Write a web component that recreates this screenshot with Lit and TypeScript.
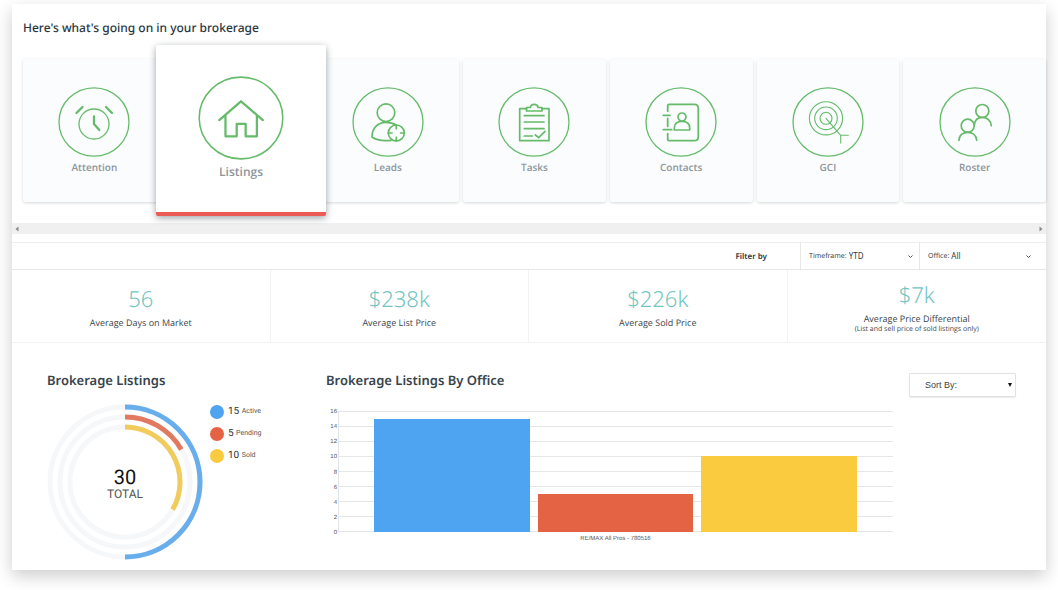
import { LitElement, html, svg, css, SVGTemplateResult } from "lit";
import { customElement, property, state } from "lit/decorators.js";
import { classMap } from "lit/directives/class-map.js";

const icons: Record<string, SVGTemplateResult> = {
  Attention: svg`
    <circle cx="0" cy="2" r="15" stroke-width="1.3" />
    <path stroke-width="2.3" d="M0-5.7V2L5.3 8M-17.5-9l6-6M12-15l6 6" />`,
  Listings: svg`
    <path stroke-width="1.9" d="M-18.2 1.7 0-14 18.3 1.7M-13-2.5V15.3H-3.6V5H3.9V15.3H13.3V-2.5" />`,
  Leads: svg`
    <circle cx="-2" cy="-9.3" r="8.8" />
    <path d="M8 3C6 1.6 2.500.3-2 .3-11 .3-16 7-16 15-12 18-4 19 3 18.300" />
    <circle cx="8.300" cy="11" r="8" />
    <path d="M8.300 3v3.700M8.300 15.300V19M.3 11H4M12.600 11h3.700" />`,
  Tasks: svg`
    <path d="M-7.500-13.300h-6.800v32H15v-32H8" />
    <path d="M-7.500-11v-3.500h3.700C-3.300-17-1.500-17.600.2-17.600S3.700-17 4.200-14.500H8V-11Z" />
    <path d="M-9.700-6.300H10M-9.700 0H10M-9.700 6.700H10M-9.700 14h8M1.300 13l3.400 2.700L11 9.300" />`,
  Contacts: svg`
    <path stroke-width="1.800" d="M-13.300-10.700v-5.600q0-1.400 1.400-1.400H13.300q4 0 4 4V14.700q0 4-4 4H-11.900q-1.400 0-1.400-1.400V11.700M-13.300-3.500V4.300M-17.700-6.700h6.700M-17.700 7.700h8.400" />
    <circle cx="1" cy="-5" r="4" />
    <path d="M-6.700 8V6C-6.700 1-3-.7 1-.7S8.700 1 8.700 6V8Z" />`,
  GCI: svg`
    <g stroke-width="1.100">
      <circle cx="-2" cy="-3.700" r="16.600" />
      <circle cx="-2" cy="-3.700" r="11.300" />
      <circle cx="-2" cy="-3.700" r="6" />
      <path d="M-2-3.700 12.700 13.300H20.300M12.700 13.300V21" />
    </g>`,
  Roster: svg`
    <circle cx="7.300" cy="-11" r="6.500" />
    <path d="M-.7 3C0-3 4-4.600 7.300-4.600 12-4.600 16-1.500 16.300 3.700" />
    <circle cx="-7.300" cy="3.700" r="6.500" />
    <path d="M-16 18.300C-16 13-12 10.300-7.300 10.300S1.300 13 1.700 18.300" />`,
};

@customElement("nav-card")
class NavCard extends LitElement {
  @property() label = "";
  @property({ type: Boolean, reflect: true }) active = false;

  static styles = css`
    :host {
      display: block;
      height: 143px;
    }
    :host([active]) {
      position: relative;
      z-index: 1;
      height: 171px;
      margin: -14px;
    }
    .card {
      box-sizing: border-box;
      display: flex;
      flex-direction: column;
      align-items: center;
      gap: 2px;
      width: 100%;
      height: 100%;
      padding: 28px 0 0;
      border: 0;
      border-radius: 2px;
      background: #fafcfe;
      box-shadow: 0 1px 3px rgba(50, 60, 70, 0.2);
      color: #8e969b;
      font: 600 10px/16px "Open Sans", "Noto Sans", sans-serif;
      text-rendering: geometricPrecision;
      cursor: pointer;
    }
    .card.active {
      gap: 4px;
      padding-top: 31px;
      border-bottom: 4px solid #ec5b56;
      background: #fff;
      box-shadow: 0 2px 7px rgba(40, 50, 60, 0.45);
      font-size: 12px;
    }
    .icon {
      width: 72px;
      height: 70px;
      fill: none;
      stroke: #66bb6a;
      stroke-width: 1.7;
      stroke-linecap: round;
      stroke-linejoin: round;
    }
    .active .icon {
      width: 86px;
      height: 84px;
    }
    .ring {
      stroke-width: 1.3;
    }
  `;

  render() {
    return html`
      <button class=${classMap({ card: true, active: this.active })} aria-pressed=${this.active}>
        <svg class="icon" viewBox="-36 -35 72 70" aria-hidden="true">
          <ellipse class="ring" rx="35" ry="34.2" />
          ${icons[this.label]}
        </svg>
        <span>${this.label}</span>
      </button>
    `;
  }
}

const series = [
  { name: "Active", value: 15, fill: "#4fa4f2", arc: "#68adec", radius: 75 },
  { name: "Pending", value: 5, fill: "#e56345", arc: "#e27a62", radius: 65 },
  { name: "Sold", value: 10, fill: "#facb3f", arc: "#f1cc5d", radius: 55 },
];
const total = 30;
const axisMax = 16;
const ticks = [16, 14, 12, 10, 8, 6, 4, 2, 0];

// Clockwise arc that starts at twelve o'clock and covers the given share of the circle.
function arcPath(radius: number, share: number): string {
  const angle = share * 2 * Math.PI;
  const x = radius * Math.sin(angle);
  const y = -radius * Math.cos(angle);
  return `M0 ${-radius}A${radius} ${radius} 0 ${share > 0.5 ? 1 : 0} 1 ${x} ${y}`;
}

@customElement("listings-rings")
class ListingsRings extends LitElement {
  static styles = css`
    :host {
      display: flex;
      align-items: flex-start;
      gap: 7px;
      font-family: Roboto, sans-serif;
      text-rendering: geometricPrecision;
    }
    .donut {
      display: grid;
      place-items: center;
    }
    .rings,
    .total {
      grid-area: 1 / 1;
    }
    .rings {
      width: 156px;
      height: 156px;
      fill: none;
      stroke-width: 5;
    }
    .track {
      stroke: #f5f7f9;
    }
    .total {
      display: flex;
      flex-direction: column;
      align-items: center;
      padding-top: 4px;
      color: #555;
      font-size: 12px;
      line-height: 14px;
    }
    .count {
      color: #111;
      font-size: 20px;
      line-height: 19px;
    }
    .legend {
      display: flex;
      flex-direction: column;
      gap: 6px;
      margin: 0;
      padding: 0;
      list-style: none;
    }
    .item {
      display: flex;
      align-items: center;
      gap: 4px;
      height: 16px;
      color: #333;
      font-size: 10px;
      line-height: 12px;
    }
    .dot {
      width: 14px;
      height: 14px;
      border-radius: 50%;
    }
    .text {
      padding-bottom: 2px;
    }
    .name {
      color: #555;
      font-size: 7px;
      vertical-align: 1px;
    }
  `;

  render() {
    return html`
      <div class="donut">
        <svg class="rings" viewBox="-78 -78 156 156" aria-hidden="true">
          ${series.map(
            (s) => svg`
              <circle class="track" r=${s.radius} />
              <path stroke=${s.arc} d=${arcPath(s.radius, s.value / total)} />`
          )}
        </svg>
        <div class="total"><span class="count">${total}</span><span>TOTAL</span></div>
      </div>
      <ul class="legend">
        ${series.map(
          (s) => html`<li class="item">
            <span class="dot" style="background:${s.fill}"></span>
            <span class="text">${s.value} <span class="name">${s.name}</span></span>
          </li>`
        )}
      </ul>
    `;
  }
}

@customElement("office-bars")
class OfficeBars extends LitElement {
  static styles = css`
    :host {
      display: grid;
      grid-template-columns: 12px minmax(0, 1fr);
      color: #555;
      font: 6px/8px "Liberation Sans", Arial, sans-serif;
    }
    .axis {
      display: flex;
      flex-direction: column;
      justify-content: space-between;
      grid-row: 1 / 3;
      height: 129px;
      padding-right: 1px;
      text-align: right;
    }
    .plot {
      display: grid;
      height: 121px;
      margin-top: 3px;
    }
    .lines,
    .bars {
      grid-area: 1 / 1;
      display: flex;
    }
    .lines {
      flex-direction: column;
      justify-content: space-between;
      border-left: 1px solid #e4e7e8;
    }
    .line {
      height: 1px;
      background: #e4e7e8;
    }
    .bars {
      align-items: flex-end;
      justify-content: center;
      gap: 8px;
      padding: 0 6.5%;
      z-index: 1;
    }
    .bar {
      flex: 1;
    }
    .office {
      grid-column: 2;
      margin-top: 3px;
      text-align: center;
    }
  `;

  render() {
    return html`
      <div class="axis">${ticks.map((t) => html`<span>${t}</span>`)}</div>
      <div class="plot">
        <div class="lines">${ticks.map(() => html`<div class="line"></div>`)}</div>
        <div class="bars">
          ${series.map(
            (s) =>
              html`<div class="bar" style="height:${(s.value / axisMax) * 100}%;background:${s.fill}"></div>`
          )}
        </div>
      </div>
      <div class="office">RE/MAX All Pros - 780516</div>
    `;
  }
}

@customElement("app-root")
class AppRoot extends LitElement {
  @state() private selected = "Listings";

  static styles = css`
    :host {
      display: block;
      padding: 4px 12px 20px;
      background: #fff;
      color: #2a363e;
      font-family: "Open Sans", "Noto Sans", sans-serif;
      text-rendering: geometricPrecision;
    }
    .panel {
      background: #fff;
      box-shadow: 0 6px 16px rgba(0, 0, 0, 0.2);
    }
    .overview {
      padding: 14px 0 21px 11px;
    }
    .title {
      margin: 0 0 21px;
      font-family: "Noto Sans", "Open Sans", sans-serif;
      font-size: 12px;
      font-weight: 500;
      line-height: 20px;
    }
    .cards {
      display: grid;
      grid-template-columns: repeat(7, minmax(0, 1fr));
      gap: 4px;
    }
    .scrollbar {
      display: flex;
      align-items: center;
      justify-content: space-between;
      height: 11px;
      margin-bottom: 8px;
      padding: 0 3px;
      background: #f0f0f0;
    }
    .arrow {
      width: 4px;
      height: 6px;
      fill: #8a8a8a;
    }
    .filters {
      display: grid;
      grid-template-columns: 1fr 119px 127px;
      height: 26px;
      border-top: 1px solid #eceeee;
      border-bottom: 1px solid #e6e8e8;
      font-family: "Noto Sans", "Open Sans", sans-serif;
      line-height: 27px;
    }
    .filter-title {
      padding-right: 33px;
      text-align: right;
      font-size: 8px;
      font-weight: 600;
    }
    .filter {
      display: flex;
      align-items: center;
      gap: 2px;
      padding: 0 6px 0 8px;
      border-left: 1px solid #e6e8e8;
      color: #3c464c;
      font-size: 7px;
    }
    .filter.last {
      padding-right: 15px;
    }
    .choice {
      flex: 1;
      min-width: 0;
      padding: 0 0 1px;
      border: 0;
      background: none;
      appearance: none;
      color: #2f393f;
      font: 8px/16px "Noto Sans", "Open Sans", sans-serif;
    }
    .chevron {
      width: 5px;
      height: 5px;
      fill: none;
      stroke: #555;
    }
    .stats {
      display: grid;
      grid-template-columns: repeat(4, minmax(0, 1fr));
      border-bottom: 1px solid #f1f3f3;
    }
    .stat {
      box-sizing: border-box;
      display: flex;
      flex-direction: column;
      align-items: center;
      justify-content: center;
      min-height: 72px;
      padding-top: 2px;
      border-right: 1px solid #f1f3f3;
      font-size: 9px;
      line-height: 12px;
      color: #3c464c;
    }
    .stat:last-child {
      padding-top: 4px;
      border-right: 0;
    }
    .figure {
      padding-bottom: 4px;
      color: #71c5bf;
      font-family: "Noto Sans", "Open Sans", sans-serif;
      font-size: 22px;
      font-weight: 300;
      line-height: 28px;
    }
    .note {
      font-size: 7px;
      line-height: 10px;
    }
    .charts {
      display: grid;
      grid-template-columns: 279px minmax(0, 1fr) 107px;
      padding: 27px 30px 10px 35px;
    }
    .heading {
      margin: 0;
      font-family: "Noto Sans", "Open Sans", sans-serif;
      font-size: 13px;
      font-weight: 600;
      line-height: 20px;
      color: #38444c;
    }
    .rings {
      margin-top: 14px;
    }
    .bars {
      margin-top: 18px;
      padding-right: 16px;
    }
    .sort {
      display: grid;
      align-self: start;
      align-items: center;
      margin-top: 3px;
    }
    .sort-select {
      grid-area: 1 / 1;
      width: 100%;
      height: 24px;
      padding: 0 15px;
      border: 1px solid #dfe3e5;
      border-radius: 1px;
      background: #fff;
      box-shadow: 0 1px 1px rgba(0, 0, 0, 0.08);
      appearance: none;
      color: #444;
      font: 9px "Liberation Sans", Arial, sans-serif;
    }
    .caret {
      grid-area: 1 / 1;
      justify-self: end;
      width: 4px;
      height: 4px;
      margin-right: 4px;
      fill: #111;
      pointer-events: none;
    }
  `;

  private chevron() {
    return html`<svg class="chevron" viewBox="0 0 5 5" aria-hidden="true"><path d="M.5 1.500 2.500 3.500 4.500 1.500" /></svg>`;
  }

  private stat(figure: string, label: string, note = "") {
    return html`<div class="stat">
      <span class="figure">${figure}</span>
      <span>${label}</span>
      ${note ? html`<span class="note">${note}</span>` : ""}
    </div>`;
  }

  render() {
    return html`
      <main class="panel">
        <section class="overview">
          <h1 class="title">Here's what's going on in your brokerage</h1>
          <nav class="cards">
            ${Object.keys(icons).map(
              (name) => html`<nav-card
                label=${name}
                ?active=${name === this.selected}
                @click=${() => (this.selected = name)}
              ></nav-card>`
            )}
          </nav>
        </section>
        <div class="scrollbar" aria-hidden="true">
          <svg class="arrow" viewBox="0 0 4 6"><path d="M3.500.5v5L.5 3z" /></svg>
          <svg class="arrow" viewBox="0 0 4 6"><path d="M.5.5v5L3.500 3z" /></svg>
        </div>
        <div class="filters">
          <span class="filter-title">Filter by</span>
          <div class="filter">
            <label for="timeframe">Timeframe:</label>
            <select class="choice" id="timeframe"><option>YTD</option></select>
            ${this.chevron()}
          </div>
          <div class="filter last">
            <label for="office">Office:</label>
            <select class="choice" id="office"><option>All</option></select>
            ${this.chevron()}
          </div>
        </div>
        <section class="stats">
          ${this.stat("56", "Average Days on Market")}
          ${this.stat("$238k", "Average List Price")}
          ${this.stat("$226k", "Average Sold Price")}
          ${this.stat("$7k", "Average Price Differential", "(List and sell price of sold listings only)")}
        </section>
        <section class="charts">
          <div>
            <h2 class="heading">Brokerage Listings</h2>
            <listings-rings class="rings"></listings-rings>
          </div>
          <div>
            <h2 class="heading">Brokerage Listings By Office</h2>
            <office-bars class="bars"></office-bars>
          </div>
          <div class="sort">
            <select class="sort-select" aria-label="Sort By"><option>Sort By:</option></select>
            <svg class="caret" viewBox="0 0 4 4" aria-hidden="true"><path d="M0 0h4L2 4z" /></svg>
          </div>
        </section>
      </main>
    `;
  }
}
